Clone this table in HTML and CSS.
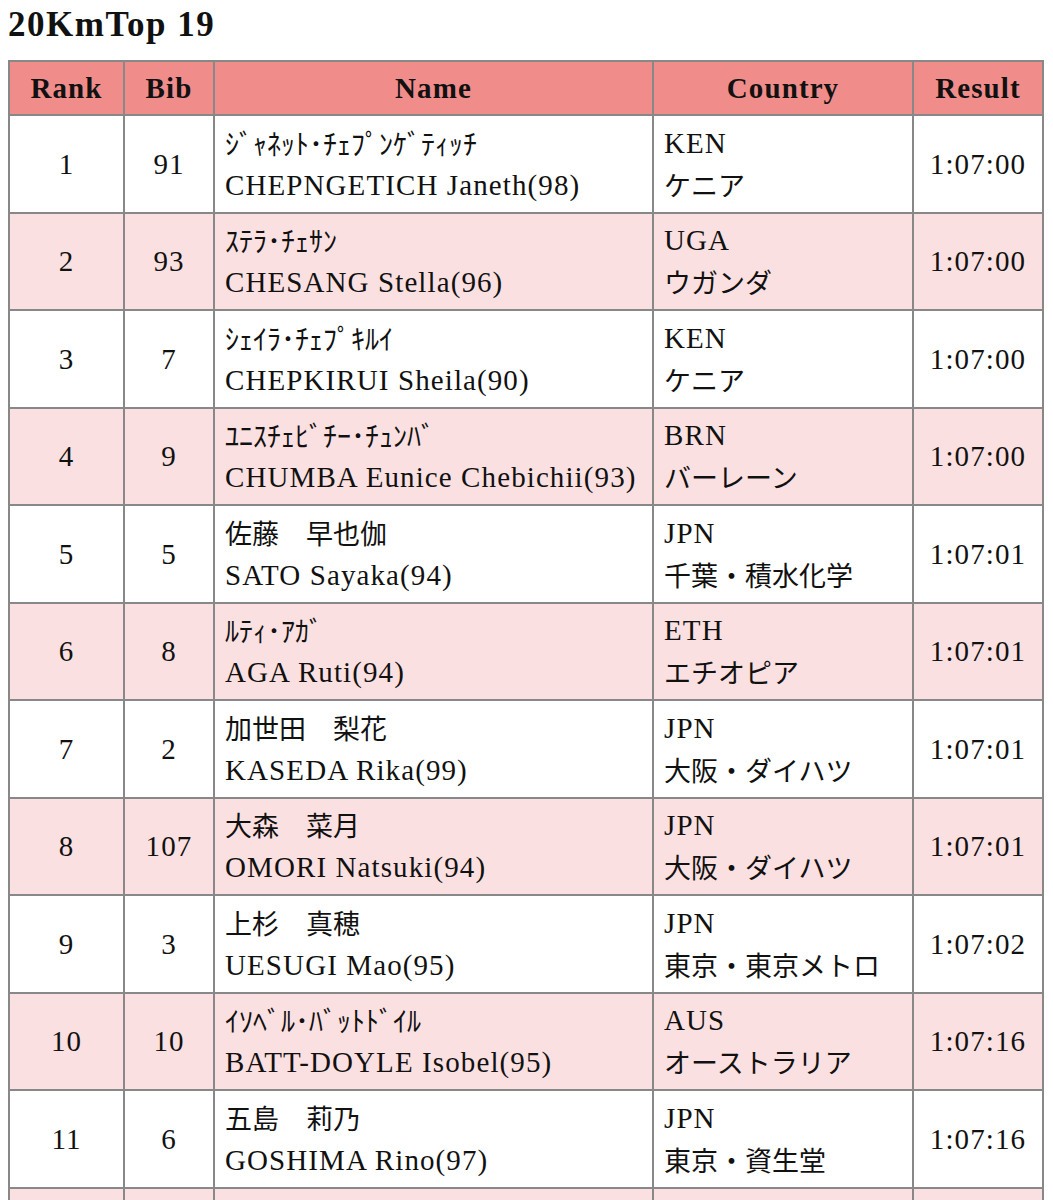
FILE: index.html
```html
<!DOCTYPE html>
<html lang="ja">
<head>
<meta charset="utf-8">
<title>20KmTop 19</title>
<link rel="stylesheet" href="styles.css">
</head>
<body>
<div class="page">
<h1 class="title">20KmTop 19</h1>
<table class="results">
<colgroup>
<col class="c-rank"><col class="c-bib"><col class="c-name"><col class="c-country"><col class="c-result">
</colgroup>
<thead>
<tr><th>Rank</th><th>Bib</th><th>Name</th><th>Country</th><th>Result</th></tr>
</thead>
<tbody>
<tr><td class="num">1</td><td class="num">91</td><td class="txt"><div class="kana">ｼﾞｬﾈｯﾄ･ﾁｪﾌﾟﾝｹﾞﾃｨｯﾁ</div><div>CHEPNGETICH Janeth(98)</div></td><td class="txt"><div>KEN</div><div class="ja">ケニア</div></td><td class="num">1:07:00</td></tr>
<tr><td class="num">2</td><td class="num">93</td><td class="txt"><div class="kana">ｽﾃﾗ･ﾁｪｻﾝ</div><div>CHESANG Stella(96)</div></td><td class="txt"><div>UGA</div><div class="ja">ウガンダ</div></td><td class="num">1:07:00</td></tr>
<tr><td class="num">3</td><td class="num">7</td><td class="txt"><div class="kana">ｼｪｲﾗ･ﾁｪﾌﾟｷﾙｲ</div><div>CHEPKIRUI Sheila(90)</div></td><td class="txt"><div>KEN</div><div class="ja">ケニア</div></td><td class="num">1:07:00</td></tr>
<tr><td class="num">4</td><td class="num">9</td><td class="txt"><div class="kana">ﾕﾆｽﾁｪﾋﾞﾁｰ･ﾁｭﾝﾊﾞ</div><div>CHUMBA Eunice Chebichii(93)</div></td><td class="txt"><div>BRN</div><div class="ja">バーレーン</div></td><td class="num">1:07:00</td></tr>
<tr><td class="num">5</td><td class="num">5</td><td class="txt"><div class="ja">佐藤　早也伽</div><div>SATO Sayaka(94)</div></td><td class="txt"><div>JPN</div><div class="ja">千葉・積水化学</div></td><td class="num">1:07:01</td></tr>
<tr><td class="num">6</td><td class="num">8</td><td class="txt"><div class="kana">ﾙﾃｨ･ｱｶﾞ</div><div>AGA Ruti(94)</div></td><td class="txt"><div>ETH</div><div class="ja">エチオピア</div></td><td class="num">1:07:01</td></tr>
<tr><td class="num">7</td><td class="num">2</td><td class="txt"><div class="ja">加世田　梨花</div><div>KASEDA Rika(99)</div></td><td class="txt"><div>JPN</div><div class="ja">大阪・ダイハツ</div></td><td class="num">1:07:01</td></tr>
<tr><td class="num">8</td><td class="num">107</td><td class="txt"><div class="ja">大森　菜月</div><div>OMORI Natsuki(94)</div></td><td class="txt"><div>JPN</div><div class="ja">大阪・ダイハツ</div></td><td class="num">1:07:01</td></tr>
<tr><td class="num">9</td><td class="num">3</td><td class="txt"><div class="ja">上杉　真穂</div><div>UESUGI Mao(95)</div></td><td class="txt"><div>JPN</div><div class="ja">東京・東京メトロ</div></td><td class="num">1:07:02</td></tr>
<tr><td class="num">10</td><td class="num">10</td><td class="txt"><div class="kana">ｲｿﾍﾞﾙ･ﾊﾞｯﾄﾄﾞｲﾙ</div><div>BATT-DOYLE Isobel(95)</div></td><td class="txt"><div>AUS</div><div class="ja">オーストラリア</div></td><td class="num">1:07:16</td></tr>
<tr><td class="num">11</td><td class="num">6</td><td class="txt"><div class="ja">五島　莉乃</div><div>GOSHIMA Rino(97)</div></td><td class="txt"><div>JPN</div><div class="ja">東京・資生堂</div></td><td class="num">1:07:16</td></tr>
<tr><td class="num">&nbsp;</td><td class="num">&nbsp;</td><td class="txt"><div>&nbsp;</div><div>&nbsp;</div></td><td class="txt"><div>&nbsp;</div><div>&nbsp;</div></td><td class="num">&nbsp;</td></tr>
</tbody>
</table>
</div>
</body>
</html>
```

FILE: styles.css
```css
html, body {
  margin: 0;
  padding: 0;
  background: #ffffff;
}

body {
  font-family: "Liberation Serif", "Noto Sans CJK JP", serif;
  color: #111111;
}

.page {
  padding: 5px 0 0 8px;
}

.title {
  margin: 0 0 15px 0;
  font-size: 35px;
  line-height: 40px;
  font-weight: bold;
  letter-spacing: 1.5px;
  color: #111111;
}

.results {
  border-collapse: collapse;
  table-layout: fixed;
  width: 1034px;
  border: 2px solid #888888;
  font-size: 29px;
  letter-spacing: 1.1px;
}

.c-rank { width: 115px; }
.c-bib { width: 90px; }
.c-name { width: 439px; }
.c-country { width: 260px; }
.c-result { width: 130px; }

.results th,
.results td {
  border: 2px solid #888888;
  padding: 5.75px 10px;
  line-height: 42px;
  vertical-align: middle;
}

.results th {
  background: #f08d8b;
  font-weight: bold;
  text-align: center;
  color: #111111;
  padding-top: 4.5px;
  padding-bottom: 5.5px;
}

.results tbody tr:nth-child(even) td {
  background: #fbe0e1;
}

.results td.num {
  text-align: center;
  padding-left: 4px;
  padding-right: 4px;
}

.results td.txt {
  text-align: left;
  white-space: nowrap;
  overflow: hidden;
}

.kana {
  font-family: "Noto Sans CJK JP", sans-serif;
  font-size: 28px;
  letter-spacing: 0;
}

.ja {
  font-family: "Noto Sans CJK JP", sans-serif;
  font-size: 27px;
  letter-spacing: 0;
}
```
